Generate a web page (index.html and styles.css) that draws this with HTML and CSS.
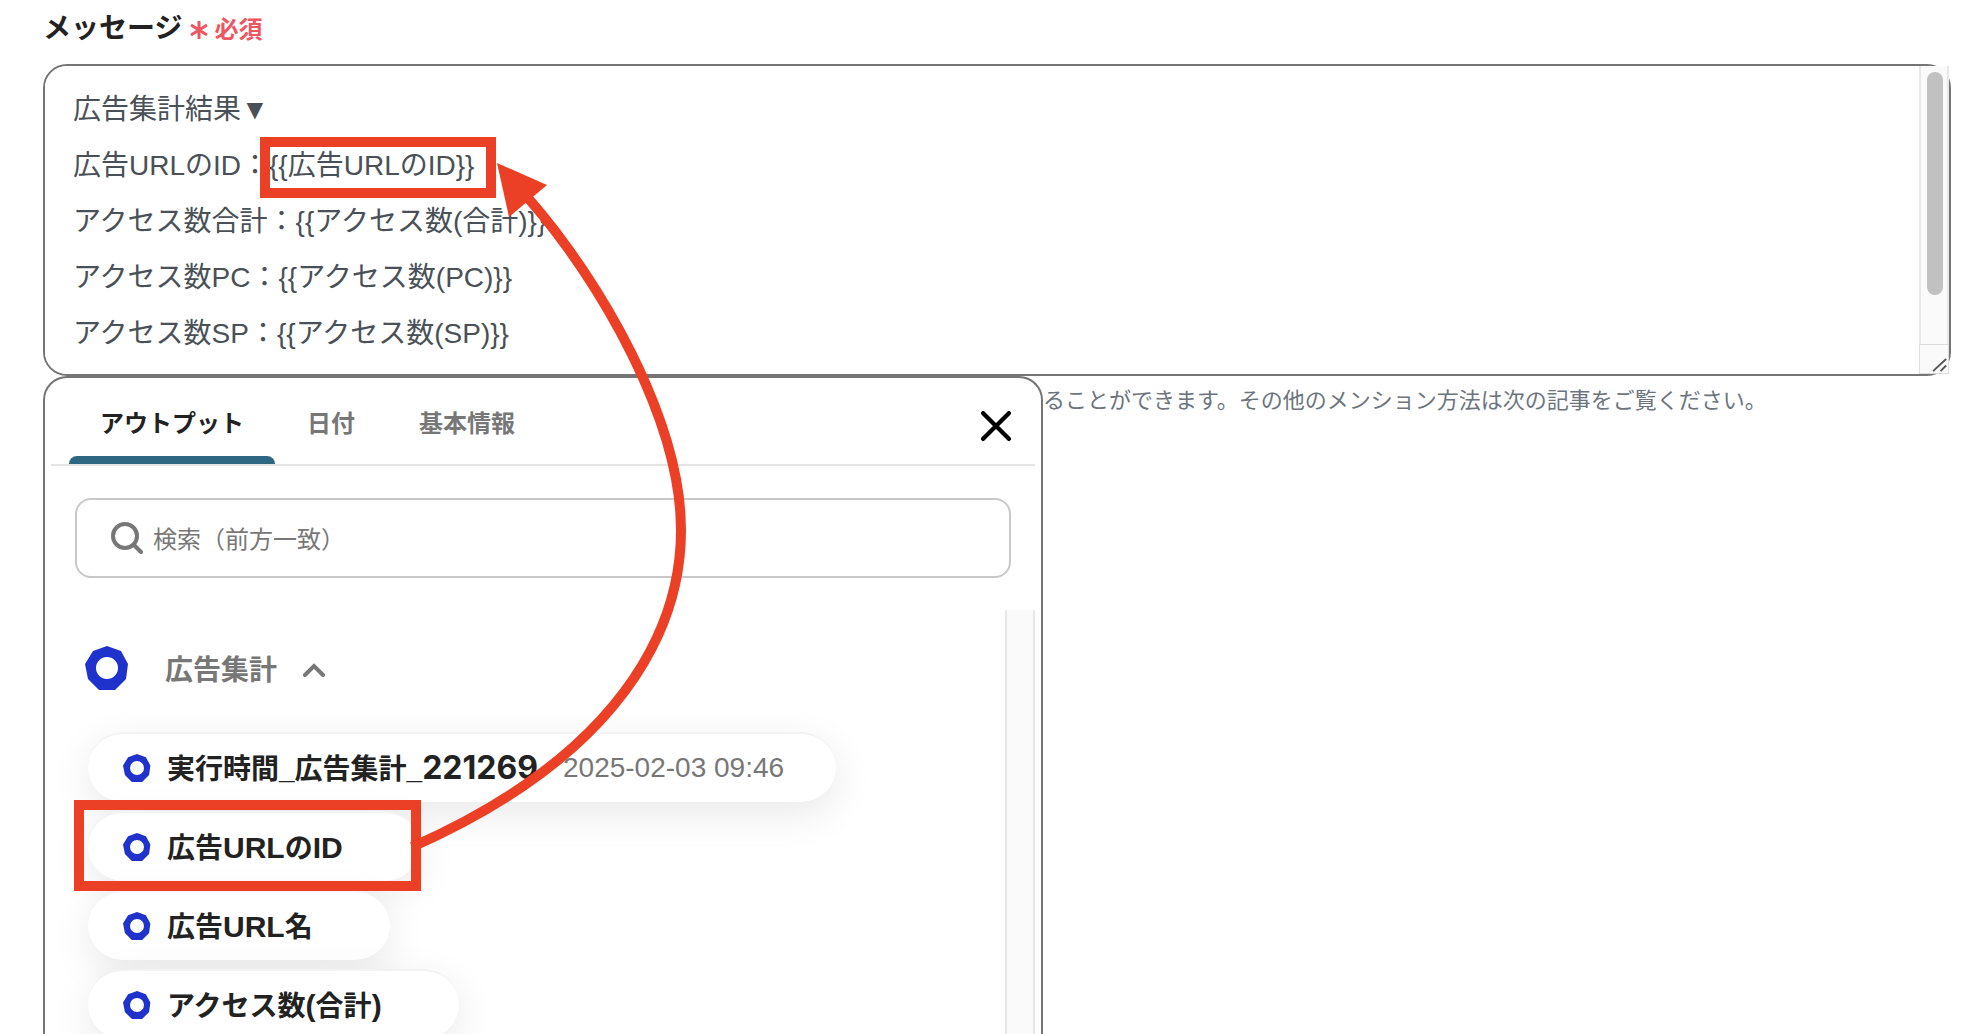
FILE: index.html
```html
<!DOCTYPE html>
<html lang="ja">
<head>
    <meta charset="UTF-8">
    <meta name="viewport" content="width=device-width, initial-scale=1.0">
    <title>メッセージ設定</title>
    <link rel="stylesheet" href="styles.css">
</head>
<body>
    <svg class="symbols" aria-hidden="true">
        <symbol id="ring" viewBox="0 0 44 44">
            <path fill="#1f33cc" fill-rule="evenodd" d="M22 0L36 5L43 18L41 33L30 44H14L3 33L0 18L8 5ZM22 11A11 11 0 1 0 22 33A11 11 0 1 0 22 11Z"/>
        </symbol>
    </svg>

    <main class="field">
        <label class="field-label" for="message">メッセージ<span class="required"><svg class="asterisk" viewBox="0 0 18 20" aria-hidden="true"><path d="M9 1V19M1 5L17 15M17 5L1 15"/></svg>必須</span></label>

        <div class="message-box">
            <textarea id="message" name="message" spellcheck="false">広告集計結果▼
広告URLのID：{{広告URLのID}}
アクセス数合計：{{アクセス数(合計)}}
アクセス数PC：{{アクセス数(PC)}}
アクセス数SP：{{アクセス数(SP)}}
</textarea>
            <div class="scrollbar" aria-hidden="true">
                <div class="track"><div class="thumb"></div></div>
                <svg class="resizer" viewBox="0 0 30 30"><path d="M14 28L28 15M22 28L28 22"/></svg>
            </div>
        </div>

        <div class="below">
            <section class="panel">
                <div class="tabs">
                    <button type="button" class="tab active">アウトプット</button>
                    <button type="button" class="tab">日付</button>
                    <button type="button" class="tab">基本情報</button>
                    <button type="button" class="close" aria-label="閉じる">
                        <svg viewBox="0 0 28 28"><path d="M2 2L26 26M26 2L2 26"/></svg>
                    </button>
                </div>

                <label class="search">
                    <svg viewBox="0 0 32 32" aria-hidden="true"><circle cx="14" cy="14" r="12"/><path d="M23 23L30 30"/></svg>
                    <input type="text" name="search" placeholder="検索（前方一致）" aria-label="検索">
                </label>

                <div class="results">
                    <div class="list">
                        <button type="button" class="group">
                            <svg class="group-icon"><use href="#ring"/></svg>
                            <span>広告集計</span>
                            <svg class="chevron" viewBox="0 0 22 14"><path d="M2 12L11 3L20 12"/></svg>
                        </button>
                        <ul class="chips">
                            <li><button type="button" class="chip"><svg><use href="#ring"/></svg><span class="name">実行時間_広告集計_<span class="digits">221269</span></span><span class="date">2025-02-03 09:46</span></button></li>
                            <li><button type="button" class="chip"><svg><use href="#ring"/></svg><span class="name">広告<span class="latin">URL</span>の<span class="latin">ID</span></span></button></li>
                            <li><button type="button" class="chip"><svg><use href="#ring"/></svg><span class="name">広告<span class="latin">URL</span>名</span></button></li>
                            <li><button type="button" class="chip"><svg><use href="#ring"/></svg><span class="name">アクセス数<span class="latin">(</span>合計<span class="latin">)</span></span></button></li>
                        </ul>
                    </div>
                    <div class="track" aria-hidden="true"></div>
                </div>
            </section>
            <p class="help">ることができます。その他のメンション方法は次の記事をご覧ください。</p>
        </div>
    </main>

    <!-- 操作説明の枠と矢印 -->
    <svg class="annotation" width="720" height="920" aria-hidden="true">
        <rect x="265" y="142" width="226" height="51"/>
        <rect x="79" y="805" width="337" height="81"/>
        <path d="M412 847C620 755 681 630 681 530C681 420 600 280 528 198"/>
        <polygon points="497,163 547,185 509,217"/>
    </svg>
</body>
</html>
```

FILE: styles.css
```css
* {
    box-sizing: border-box;
}
body {
    margin: 0;
    height: 100vh;
    overflow: hidden;
    position: relative;
    background-color: #fff;
    font-family: "Liberation Sans", "Noto Sans CJK JP", sans-serif;
    font-size: 28px;
    color: #222;
}
button, input, textarea {
    font: inherit;
    color: inherit;
}
button {
    border: none;
    background: none;
    padding: 0;
    cursor: pointer;
}
svg {
    display: block;
    flex: none;
}
.symbols {
    position: absolute;
    width: 0;
    height: 0;
}
.field {
    height: 100%;
    display: flex;
    flex-direction: column;
    padding: 0 20px 0 43px;
}
.field-label {
    display: flex;
    align-items: center;
    height: 52px;
    margin-bottom: 12px;
    font-weight: bold;
}
.required {
    display: flex;
    align-items: center;
    gap: 6px;
    margin-left: 8px;
    padding-top: 3px;
    font-size: 24px;
    color: #ee5661;
}
.asterisk {
    width: 18px;
    height: 20px;
    margin-top: 4px;
    stroke: #ee5661;
    stroke-width: 3;
}

/* message */
.message-box {
    flex: none;
    position: relative;
    height: 312px;
}
.message-box textarea {
    display: block;
    width: 100%;
    height: 100%;
    padding: 16px 60px 16px 28px;
    border: 2px solid #757575;
    border-radius: 24px;
    outline: none;
    resize: none;
    line-height: 56px;
    color: #495057;
    background-color: #fff;
}
.scrollbar {
    position: absolute;
    top: 2px;
    right: 2px;
    bottom: 2px;
    display: flex;
    flex-direction: column;
}
.track {
    flex: none;
    width: 30px;
    padding: 6px;
    border: solid #e8e8e8;
    border-width: 0 2px;
    background-color: #fafafa;
}
.scrollbar .track {
    flex: 1;
}
.thumb {
    width: 16px;
    height: 223px;
    border-radius: 8px;
    background-color: #c1c1c1;
}
.resizer {
    width: 30px;
    height: 30px;
    border: 1px solid #dcdcdc;
    background-color: #fafafa;
    stroke: #555;
    stroke-width: 2;
}

/* picker panel */
.below {
    flex: 1;
    min-height: 0;
    display: flex;
    align-items: flex-start;
}
.panel {
    width: 1000px;
    height: 100%;
    display: flex;
    flex-direction: column;
    padding: 0 6px;
    border: 2px solid #757575;
    border-bottom: none;
    border-radius: 24px 24px 0 0;
    background-color: #fff;
}
.help {
    margin: 0;
    font-size: 22px;
    line-height: 50px;
    color: #6c757d;
}
.tabs {
    flex: none;
    display: flex;
    height: 88px;
    padding: 0 24px 0 18px;
    border-bottom: 2px solid #e5e5e5;
}
.tab {
    position: relative;
    padding: 0 32px;
    font-size: 24px;
    font-weight: bold;
    color: #777;
}
.tab.active {
    padding: 0 31px;
    color: #222;
}
.tab.active::after {
    content: "";
    position: absolute;
    left: 0;
    right: 0;
    bottom: 0;
    height: 8px;
    border-radius: 8px 8px 0 0;
    background-color: #2e6781;
}
.close {
    margin-left: auto;
    padding-top: 10px;
}
.close svg {
    width: 30px;
    height: 30px;
    fill: none;
    stroke: #000;
    stroke-width: 4;
    stroke-linecap: round;
}
.search {
    flex: none;
    display: flex;
    align-items: center;
    gap: 10px;
    height: 80px;
    margin: 32px 24px;
    padding: 0 34px;
    border: 2px solid #c8c8c8;
    border-radius: 16px;
}
.search svg {
    width: 32px;
    height: 32px;
    fill: none;
    stroke: #777;
    stroke-width: 4;
    stroke-linecap: round;
}
.search input {
    flex: 1;
    border: none;
    outline: none;
    padding: 4px 0 0;
    font-size: 24px;
    background: none;
}
.search input::placeholder {
    color: #777;
}
.results {
    flex: 1;
    min-height: 0;
    display: flex;
}
.list {
    flex: 1;
    overflow: hidden;
    padding: 34px 0 0 34px;
}
.group {
    display: flex;
    align-items: center;
    height: 48px;
    font-weight: bold;
    color: #777;
}
.group span {
    margin: 0 26px 0 36px;
}
.group-icon {
    width: 44px;
    height: 46px;
}
.chevron {
    width: 22px;
    height: 14px;
    margin-top: 4px;
    fill: none;
    stroke: #777;
    stroke-width: 4;
    stroke-linecap: round;
}
.chips {
    display: flex;
    flex-direction: column;
    gap: 9px;
    margin: 40px 0 0 3px;
    padding: 0;
    list-style: none;
}
.chips li {
    display: flex;
}
.chip {
    display: flex;
    align-items: center;
    height: 70px;
    padding: 0 52px 0 35px;
    border-radius: 35px;
    border-top: 2px solid #f3f3f3;
    background-color: #fff;
    box-shadow: 0 12px 40px rgba(0, 0, 0, 0.09);
}
.chip svg {
    width: 28px;
    height: 28px;
}
.name {
    margin: 0 25px 0 16px;
    padding-top: 2px;
    font-weight: bold;
    line-height: 40px;
}
.latin {
    font-size: 30px;
}
.digits {
    font-family: Inter, sans-serif;
    font-size: 32px;
}
.date {
    color: #777;
}

.annotation {
    position: absolute;
    top: 0;
    left: 0;
    pointer-events: none;
    fill: none;
    stroke: #eb4025;
    stroke-width: 10;
}
.annotation polygon {
    fill: #eb4025;
    stroke: none;
}
```
